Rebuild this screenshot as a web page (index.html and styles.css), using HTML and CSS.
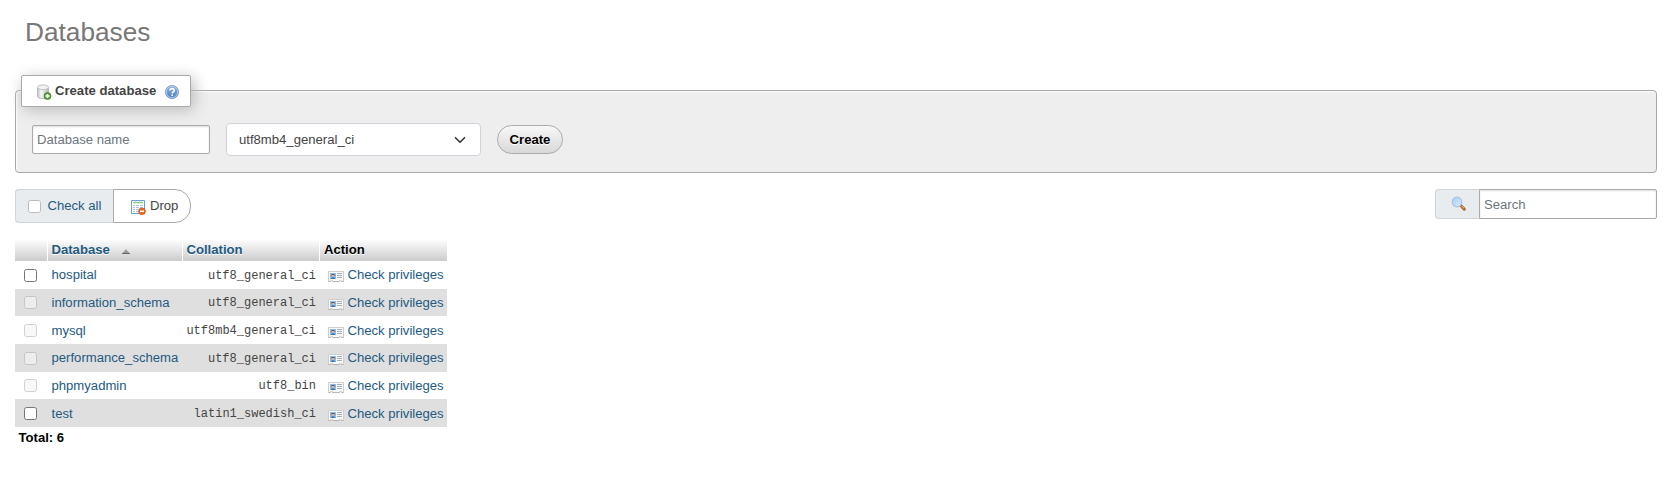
FILE: index.html
```html
<!DOCTYPE html>
<html lang="en">
<head>
<meta charset="utf-8">
<title>Databases</title>
<link rel="stylesheet" href="styles.css">
</head>
<body>
<svg class="defs" width="0" height="0">
  <defs>
    <linearGradient id="cyl" x1="0" x2="1" y1="0" y2="0"><stop offset="0" stop-color="#c4c4c4"/><stop offset=".35" stop-color="#f8f8f8"/><stop offset="1" stop-color="#b4b4b4"/></linearGradient>
    <linearGradient id="ball" x1="0" x2="0" y1="0" y2="1"><stop offset="0" stop-color="#8fb3de"/><stop offset="1" stop-color="#4a7fc0"/></linearGradient>
    <linearGradient id="lens" x1="0" x2="1" y1="0" y2="1"><stop offset="0" stop-color="#a6cdf7"/><stop offset="1" stop-color="#d9ecff"/></linearGradient>
    <symbol id="card" viewBox="0 0 16 16">
      <path d="M.5 3.500h15v10h-2v-1h-2v1h-7v-1h-2v1h-2z" fill="#f8f8f8" stroke="#cfcfcf"/>
      <path d="M.5 13.500h2m2 0h7m2 0h2" stroke="#b4b4b4"/>
      <path d="M2 5h6v6H2z" fill="#83bbf5"/>
      <path d="M3.500 6h3v2h-3z" fill="#7a5138"/><path d="M4 7h2v2H4z" fill="#e3b48f"/><path d="M3 11c0-2.300 4-2.300 4 0z" fill="#4d719e"/>
      <path d="M9 5.500h5M9 7.500h5M9 9.500h5" stroke="#a3afbd"/>
    </symbol>
  </defs>
</svg>
<h1 class="title">Databases</h1>
<fieldset class="create">
  <legend class="legend">
    <svg class="icon" width="16" height="16" viewBox="0 0 16 16"><path d="M1.500 3.300v9c0 3 11 3 11 0v-9z" fill="url(#cyl)" stroke="#bbb"/><ellipse cx="7" cy="3.300" rx="5.500" ry="2.300" fill="#f4f4f4" stroke="#c2c2c2"/><circle cx="11.500" cy="12" r="3.500" fill="#5b9c34" stroke="#3c7a20" stroke-width=".7"/><path d="M11.500 9.900v4.200M9.400 12h4.200" stroke="#fff" stroke-width="1.500"/></svg>
    <span>Create database</span>
    <svg class="help" width="16" height="16" viewBox="0 0 16 16"><circle cx="8" cy="8" r="6.600" fill="url(#ball)" stroke="#6c97cc" stroke-width=".8"/><circle cx="8" cy="8" r="5.700" fill="none" stroke="#c7daf0" stroke-width=".8"/><path d="M6 6.500C6 4 10.200 4.100 10.200 6.400c0 1.600-2 1.500-2 3.200M8.200 10.600v1.500" fill="none" stroke="#fff" stroke-width="1.600"/></svg>
  </legend>
  <div class="form">
    <input class="field name" type="text" placeholder="Database name">
    <div class="select"><span>utf8mb4_general_ci</span><svg width="12" height="12" viewBox="0 0 16 16"><path d="m2 5 6 6 6-6" fill="none" stroke="#343a40" stroke-width="2.200" stroke-linecap="round" stroke-linejoin="round"/></svg></div>
    <button class="submit">Create</button>
  </div>
</fieldset>
<div class="toolbar">
  <div class="group">
    <label class="checkall"><span class="box pale"></span>Check all</label>
    <button class="drop"><svg class="icon" width="16" height="16" viewBox="0 0 16 16"><path d="M1.500 1.500h13v13h-13z" fill="#fff" stroke="#6f9bd8"/><path d="M3 3.500h10" stroke="#8bc878" stroke-width="1.500"/><path d="M3 6.500h2m1 0h3m1 0h3M3 8.500h2m1 0h3m1 0h3M3 10.500h2m1 0h3m1 0h3M3 12.500h2m1 0h3" stroke="#a9c4e8"/><circle cx="12" cy="12.300" r="3.400" fill="#ea6a20" stroke="#c44d12" stroke-width=".6"/><path d="M10 12.300h4" stroke="#fff" stroke-width="1.500"/></svg>Drop</button>
  </div>
  <div class="search">
    <span class="glass"><svg width="16" height="16" viewBox="0 0 16 16"><path d="m9.800 9.500 3.500 3.600" stroke="#a8672c" stroke-width="3" stroke-linecap="round"/><path d="m10.600 9.900 2.400 2.400" stroke="#e5ad68" stroke-width="1.200"/><circle cx="6" cy="6" r="4.800" fill="url(#lens)" stroke="#a9c1e2" stroke-width="1.200"/></svg></span>
    <input class="field query" type="text" placeholder="Search">
  </div>
</div>
<table class="list">
  <colgroup><col class="c1"><col class="c2"><col class="c3"><col class="c4"></colgroup>
  <thead><tr><th></th><th class="link">Database<svg class="sort" width="8" height="5" viewBox="0 0 8 5"><path d="M0 4.800 4 .3l4 4.500z" fill="#999"/><path d="M0 4.500h8" stroke="#666"/></svg></th><th class="link">Collation</th><th>Action</th></tr></thead>
  <tbody>
    <tr><td><span class="box"></span></td><td>hospital</td><td>utf8_general_ci</td><td><svg class="card" width="16" height="16"><use href="#card"/></svg>Check privileges</td></tr>
    <tr><td><span class="box off"></span></td><td>information_schema</td><td>utf8_general_ci</td><td><svg class="card" width="16" height="16"><use href="#card"/></svg>Check privileges</td></tr>
    <tr><td><span class="box off"></span></td><td>mysql</td><td>utf8mb4_general_ci</td><td><svg class="card" width="16" height="16"><use href="#card"/></svg>Check privileges</td></tr>
    <tr><td><span class="box off"></span></td><td>performance_schema</td><td>utf8_general_ci</td><td><svg class="card" width="16" height="16"><use href="#card"/></svg>Check privileges</td></tr>
    <tr><td><span class="box off"></span></td><td>phpmyadmin</td><td>utf8_bin</td><td><svg class="card" width="16" height="16"><use href="#card"/></svg>Check privileges</td></tr>
    <tr><td><span class="box"></span></td><td>test</td><td>latin1_swedish_ci</td><td><svg class="card" width="16" height="16"><use href="#card"/></svg>Check privileges</td></tr>
  </tbody>
</table>
<div class="total">Total: 6</div>
</body>
</html>
```

FILE: styles.css
```css
* { box-sizing: border-box; }
body { margin: 0; padding: 0 7px 0 15px; height: 496px; overflow: hidden; background: #fff; color: #444; font: 13.12px/20px "Liberation Sans", Arial, sans-serif; }
.defs { position: absolute; }
.title { margin: 0; padding: 16px 0 0 10px; height: 74px; font-size: 26.24px; line-height: 32px; font-weight: 400; color: #777; }
.create { margin: 0; padding: 0 16px; min-width: 0; height: 99px; border: 1px solid #aaa; border-radius: 4px; background: #eee; box-shadow: 1px 1px 2px #fff inset; }
.legend { position: relative; top: 1px; display: flex; align-items: center; width: 170px; height: 32px; margin-left: -11px; padding: 0 10px 0 14px; border: 1px solid #aaa; border-radius: 2px; background: #fff; box-shadow: 3px 3px 15px #bbb; font-weight: 700; line-height: 30px; }
.legend .icon { margin: 2px 3px 0 0; }
.legend span { width: 102px; white-space: nowrap; }
.help { margin: 2px 0 0 7px; }
.form { display: flex; align-items: center; gap: 16px; padding-top: 17px; }
.field { height: 29px; margin: 0; padding: 0 4px; border: 1px solid #aaa; border-radius: 2px; background: #fff; box-shadow: 0 1px 2px #ddd inset; font: inherit; color: #444; }
.field::placeholder { color: #6c757d; opacity: 1; }
.name { width: 178px; }
.select { display: flex; align-items: center; justify-content: space-between; width: 255px; height: 33px; padding: 0 14px 0 12px; border: 1px solid #ced4da; border-radius: 4px; background: #fff; }
.submit { width: 66px; height: 29px; padding: 0; border: 1px solid #aaa; border-radius: 15px; background: linear-gradient(#f8f8f8, #d8d8d8); color: #000; font: 700 13.12px/20px "Liberation Sans", Arial, sans-serif; text-shadow: 0 1px 0 #fff; }
.toolbar { display: flex; justify-content: space-between; padding-top: 16px; height: 66px; }
.group { display: flex; height: 34px; }
.checkall { display: flex; align-items: center; width: 98px; padding: 0 0 1px 12px; border: 1px solid #ced4da; border-right: 0; border-radius: 4px 0 0 4px; background: #e9ecef; color: #235a81; white-space: nowrap; }
.box { display: block; width: 13px; height: 13px; border: 1px solid #767676; border-radius: 2.500px; background: #fff; }
.box.pale { margin: 2px 6.500px 0 0; border-color: #bbb; }
.box.off { border-color: #d1d1d1; background: #f8f8f8; }
.list tbody tr:nth-child(even) .off { background: #ededed; border-color: #c5c5c5; }
.drop { display: flex; align-items: center; width: 78px; padding: 0 0 1px 16px; border: 1px solid #aaa; border-radius: 0 16px 16px 0; background: #fff; color: #444; font: inherit; }
.drop .icon { margin: 3px 4px 0 0; }
.search { display: flex; height: 30px; }
.glass { width: 44px; padding: 6px 0 0 15px; border: 1px solid #ced4da; border-right: 0; border-radius: 4px 0 0 4px; background: #e9ecef; }
.glass svg { display: block; }
.query { width: 178px; height: 30px; border-radius: 0 2px 2px 0; }
.list { width: 432px; border-spacing: 0; table-layout: fixed; }
.c1 { width: 33px; }
.c2 { width: 135px; }
.c3 { width: 137px; }
.c4 { width: 127px; }
.list th { height: 22px; padding: 0 3.500px; text-align: left; line-height: 20px; color: #000; text-shadow: 0 1px 0 #fff; background: linear-gradient(#fff, #ccc); border-right: 1px solid #fff; }
.list th:last-child { border-right: 0; padding-left: 4px; }
.list th.link { color: #235a81; }
.sort { margin-left: 12px; }
.list td { height: 27.660px; padding: 1px 0 0; line-height: 20px; vertical-align: middle; white-space: nowrap; color: #235a81; }
.list tbody tr:nth-child(even) { background: #dfdfdf; }
.list td:first-child { padding: 1px 0 0 9px; }
.list td:nth-child(2) { padding-left: 3.500px; }
.list td:nth-child(3) { padding: 2px 4px 0 0; text-align: right; color: #444; font: 12px/20px "Liberation Mono", monospace; }
.list td:nth-child(4) { padding-left: 8px; }
.card { margin-right: 3.500px; vertical-align: -5px; }
.total { padding: 1px 3.500px 0; color: #000; font-weight: 700; }
```
